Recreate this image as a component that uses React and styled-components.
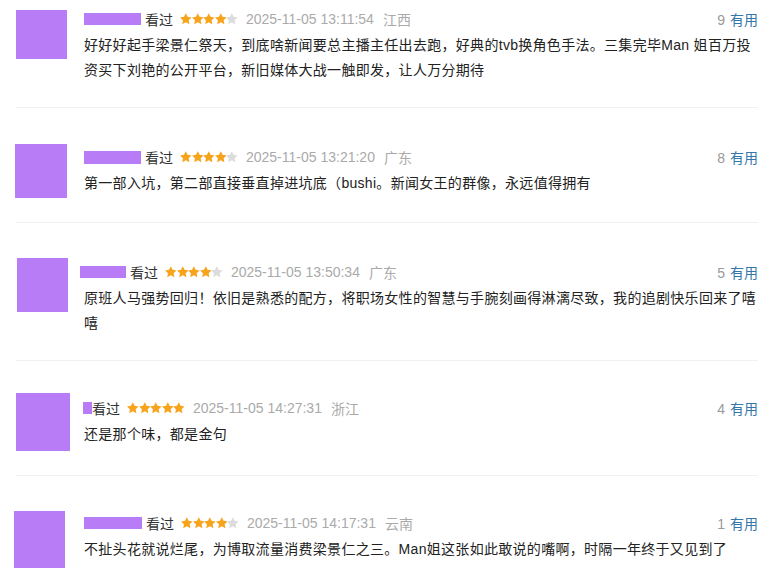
import React from "react";
import styled, { createGlobalStyle } from "styled-components";

const Global = createGlobalStyle`
  html, body { margin: 0; padding: 0; background: #fff; }
  body { font-family: "Liberation Sans", "Noto Sans CJK SC", sans-serif; }
`;

const List = styled.div`
  width: 765px;
  padding: 0 7px 0 16px;
  box-sizing: border-box;
`;

const Item = styled.div`
  display: flex;
  align-items: flex-start;
  padding: ${(p) => p.$pt}px 0 24px;
  border-bottom: 1px solid ${(p) => (p.$last ? "transparent" : "#f0f0f0")};
`;

const Avatar = styled.div`
  flex: none;
  width: ${(p) => p.$w}px;
  height: ${(p) => p.$h}px;
  margin-top: ${(p) => p.$top}px;
  margin-left: ${(p) => p.$left}px;
  background: #b77cf6;
`;

const Body = styled.div`
  flex: 1;
  margin-left: ${(p) => p.$ml}px;
`;

const Header = styled.div`
  display: flex;
  align-items: center;
  height: 18px;
  font-size: 14px;
  line-height: 18px;
`;

const Name = styled.span`
  display: inline-block;
  width: ${(p) => p.$w}px;
  height: ${(p) => p.$h}px;
  margin-left: ${(p) => p.$ml}px;
  margin-right: ${(p) => p.$mr}px;
  background: #b77cf6;
`;

const Watched = styled.span`
  color: #333;
  font-family: "Noto Sans CJK SC", sans-serif;
  margin-right: 7px;
`;

const Stars = styled.span`
  display: inline-flex;
  margin-right: 8px;
`;

const Date = styled.span`
  color: #aaa;
`;

const Region = styled.span`
  color: #aaa;
  margin-left: 9px;
  font-family: "Noto Sans CJK SC", sans-serif;
`;

const Useful = styled.span`
  margin-left: auto;
  color: #999;
`;

const UsefulLink = styled.span`
  color: #3377aa;
  margin-left: 5px;
  font-family: "Noto Sans CJK SC", sans-serif;
`;

const Content = styled.p`
  margin: 5px 0 0;
  font-size: 14px;
  line-height: 25px;
  letter-spacing: 0.3px;
  color: #222;
  font-family: "Liberation Sans", "Noto Sans CJK SC", sans-serif;
`;

const Star = ({ on }) => (
  <svg width="11.6" height="12" viewBox="0 0 24 24" style={{ display: "block" }}>
    <path
      d="M12 0.3l3.7 7.3 8.2 1.2-6 5.7 1.5 8.2L12 18.8l-7.4 3.9 1.5-8.2-6-5.7 8.2-1.2z"
      fill={on ? "#f7a41d" : "#dcdcdc"}
    />
  </svg>
);

const data = [
  {
    pt: 10,
    av: { w: 51, h: 49, top: 0, left: 0 },
    name: { w: 57, h: 12, ml: 0, mr: 4 },
    stars: 4,
    date: "2025-11-05 13:11:54",
    region: "江西",
    useful: 9,
    text: "好好好起手梁景仁祭天，到底啥新闻要总主播主任出去跑，好典的tvb换角色手法。三集完毕Man 姐百万投资买下刘艳的公开平台，新旧媒体大战一触即发，让人万分期待",
  },
  {
    pt: 40,
    av: { w: 52, h: 54, top: -4, left: -1 },
    name: { w: 57, h: 13, ml: 0, mr: 4 },
    stars: 4,
    date: "2025-11-05 13:21:20",
    region: "广东",
    useful: 8,
    text: "第一部入坑，第二部直接垂直掉进坑底（bushi。新闻女王的群像，永远值得拥有",
  },
  {
    pt: 40,
    av: { w: 51, h: 54, top: -5, left: 1 },
    name: { w: 46, h: 12, ml: -4, mr: 4 },
    stars: 4,
    date: "2025-11-05 13:50:34",
    region: "广东",
    useful: 5,
    text: "原班人马强势回归！依旧是熟悉的配方，将职场女性的智慧与手腕刻画得淋漓尽致，我的追剧快乐回来了嘻嘻",
  },
  {
    pt: 38,
    av: { w: 54, h: 58, top: -6, left: 0 },
    name: { w: 9, h: 12, ml: -1, mr: 0 },
    stars: 5,
    date: "2025-11-05 14:27:31",
    region: "浙江",
    useful: 4,
    text: "还是那个味，都是金句",
  },
  {
    pt: 38,
    av: { w: 51, h: 57, top: -3, left: -2 },
    name: { w: 58, h: 12, ml: 0, mr: 4 },
    stars: 4,
    date: "2025-11-05 14:17:31",
    region: "云南",
    useful: 1,
    text: "不扯头花就说烂尾，为博取流量消费梁景仁之三。Man姐这张如此敢说的嘴啊，时隔一年终于又见到了",
  },
];

export default function App() {
  return (
    <>
      <Global />
      <List>
        {data.map((d, i) => (
          <Item key={i} $pt={d.pt} $last={i === data.length - 1}>
            <Avatar $w={d.av.w} $h={d.av.h} $top={d.av.top} $left={d.av.left} />
            <Body $ml={84 - 16 - d.av.w - d.av.left}>
              <Header>
                <Name $w={d.name.w} $h={d.name.h} $ml={d.name.ml} $mr={d.name.mr} />
                <Watched>看过</Watched>
                <Stars>
                  {[0, 1, 2, 3, 4].map((k) => (
                    <Star key={k} on={k < d.stars} />
                  ))}
                </Stars>
                <Date>{d.date}</Date>
                <Region>{d.region}</Region>
                <Useful>
                  {d.useful}
                  <UsefulLink>有用</UsefulLink>
                </Useful>
              </Header>
              <Content>{d.text}</Content>
            </Body>
          </Item>
        ))}
      </List>
    </>
  );
}
